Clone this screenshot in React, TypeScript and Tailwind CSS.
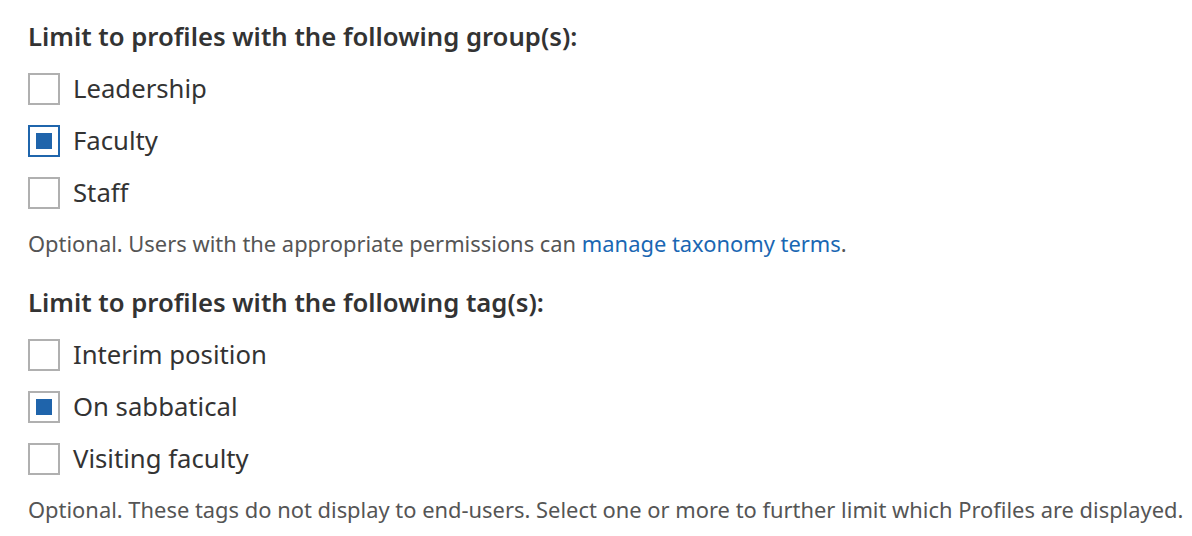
import React from "react";

type Option = { label: string; checked: boolean; focused?: boolean };

const groups: Option[] = [
  { label: "Leadership", checked: false },
  { label: "Faculty", checked: true, focused: true },
  { label: "Staff", checked: false },
];

const tags: Option[] = [
  { label: "Interim position", checked: false },
  { label: "On sabbatical", checked: true },
  { label: "Visiting faculty", checked: false },
];

function Checkbox({ label, checked, focused }: Option) {
  return (
    <label className="flex items-center gap-[13px] h-[32px]">
      <span
        className={`w-[32px] h-[32px] border-2 bg-white flex items-center justify-center shrink-0 ${
          focused ? "border-[#1f65ac]" : "border-[#b0b0b0]"
        }`}
      >
        {checked && <span className="w-[16px] h-[16px] bg-[#1f64ab]" />}
      </span>
      <span className="text-[25.7px] text-[#333333] leading-[32px]">{label}</span>
    </label>
  );
}

function Fieldset({
  title,
  options,
  children,
}: {
  title: string;
  options: Option[];
  children: React.ReactNode;
}) {
  return (
    <fieldset>
      <h3 className="text-[25.7px] font-semibold text-[#333333] leading-[32px]">{title}</h3>
      <div className="flex flex-col gap-[20px] mt-[20px]">
        {options.map((o) => (
          <Checkbox key={o.label} {...o} />
        ))}
      </div>
      <p className="text-[21.9px] text-[#555555] leading-[30px] mt-[20px] whitespace-nowrap">{children}</p>
    </fieldset>
  );
}

export default function App() {
  return (
    <main
      className="bg-white min-h-screen pl-[28px] pt-[21px] flex flex-col gap-[28px]"
      style={{ fontFamily: '"Noto Sans", sans-serif' }}
    >
      <Fieldset title="Limit to profiles with the following group(s):" options={groups}>
        Optional. Users with the appropriate permissions can{" "}
        <a href="#" className="text-[#1a67b3]">
          manage taxonomy terms
        </a>
        .
      </Fieldset>
      <Fieldset title="Limit to profiles with the following tag(s):" options={tags}>
        Optional. These tags do not display to end-users. Select one or more to further limit which
        Profiles are displayed.
      </Fieldset>
    </main>
  );
}
